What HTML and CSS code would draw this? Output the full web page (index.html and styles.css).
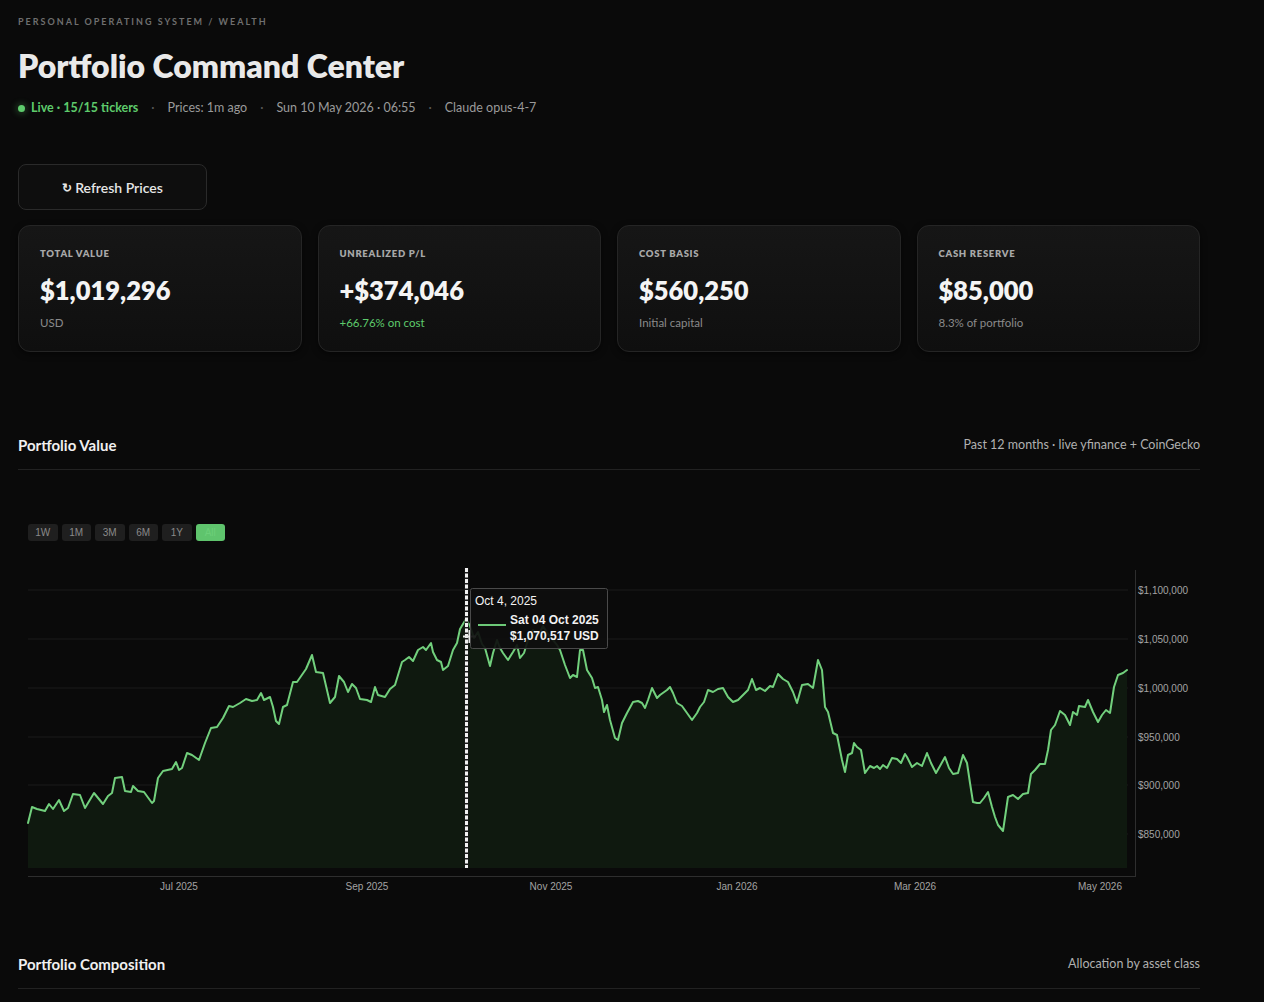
FILE: index.html
```html
<!DOCTYPE html>
<html lang="en">
<head>
<meta charset="utf-8">
<title>Portfolio Command Center</title>
<link rel="stylesheet" href="styles.css">
</head>
<body>
<main class="page">
  <div class="crumb">Personal Operating System / Wealth</div>
  <h1 class="title">Portfolio Command Center</h1>
  <div class="status">
    <span class="live"><span class="dot"></span>Live · 15/15 tickers</span>
    <span class="sep">·</span>
    <span>Prices: 1m ago</span>
    <span class="sep">·</span>
    <span>Sun 10 May 2026 · 06:55</span>
    <span class="sep">·</span>
    <span>Claude opus-4-7</span>
  </div>

  <button class="refresh" type="button"><span class="refresh-icon">↻</span> Refresh Prices</button>

  <section class="cards">
    <div class="card">
      <div class="card-label">Total Value</div>
      <div class="card-value">$1,019,296</div>
      <div class="card-sub">USD</div>
    </div>
    <div class="card">
      <div class="card-label">Unrealized P/L</div>
      <div class="card-value">+$374,046</div>
      <div class="card-sub pos">+66.76% on cost</div>
    </div>
    <div class="card">
      <div class="card-label">Cost Basis</div>
      <div class="card-value">$560,250</div>
      <div class="card-sub">Initial capital</div>
    </div>
    <div class="card">
      <div class="card-label">Cash Reserve</div>
      <div class="card-value">$85,000</div>
      <div class="card-sub">8.3% of portfolio</div>
    </div>
  </section>

  <header class="section-head">
    <h2>Portfolio Value</h2>
    <span class="section-note">Past 12 months · live yfinance + CoinGecko</span>
  </header>

  <div class="ranges">
    <button class="range" type="button">1W</button>
    <button class="range" type="button">1M</button>
    <button class="range" type="button">3M</button>
    <button class="range" type="button">6M</button>
    <button class="range" type="button">1Y</button>
    <button class="range active" type="button">All</button>
  </div>

  <svg class="chart" width="1182" height="340" viewBox="18 560 1182 340" xmlns="http://www.w3.org/2000/svg">
    <!-- horizontal gridlines: $50k steps -->
    <g class="grid">
      <line x1="28" y1="590" x2="1128" y2="590"/>
      <line x1="28" y1="639" x2="1128" y2="639"/>
      <line x1="28" y1="688" x2="1128" y2="688"/>
      <line x1="28" y1="737" x2="1128" y2="737"/>
      <line x1="28" y1="785" x2="1128" y2="785"/>
      <line x1="28" y1="834" x2="1128" y2="834"/>
    </g>

    <!-- area under the value series -->
    <polygon class="area" points="28,868 28,823 32,807 37,809 45,811 49,804 53,809 59,800 64,811 68,808 73,794 80,795 85,808 94,793 103,804 108,796 112,793 115,778 122,777 125,791 131,792 133,786 138,791 144,792 152,803 154,801 158,778 163,771 172,769 176,762 179,770 182,768 187,753 192,755 199,760 205,743 211,728 217,727 223,718 229,706 233,707 240,703 246,699 252,701 257,700 261,693 264,700 270,697 273,707 276,721 279,724 283,707 287,705 293,682 297,682 306,669 312,655 316,672 323,673 330,703 335,697 339,676 344,682 348,692 352,684 356,688 360,699 367,700 371,702 375,687 378,695 385,697 390,689 395,685 402,662 405,660 409,657 413,661 418,650 423,647 426,650 431,643 433,652 437,660 441,662 443,670 448,666 453,650 457,643 460,629 466,619 470,626 474,638 478,632 482,644 485,648 490,666 493,653 497,640 500,648 503,653 508,660 513,652 517,645 520,658 524,653 528,640 533,630 538,636 543,626 548,634 553,640 557,645 560,650 565,665 570,678 573,675 577,677 580,650 583,650 587,670 592,678 595,688 598,687 602,700 604,712 607,705 610,720 615,738 618,740 622,723 627,713 633,702 638,701 642,703 645,708 648,700 652,688 657,698 660,695 667,690 670,687 673,693 677,703 682,706 687,713 692,720 697,713 700,707 704,702 708,690 713,692 718,689 723,688 728,697 733,702 738,700 743,695 748,690 752,679 756,690 760,688 765,691 770,686 773,687 778,674 783,679 788,682 793,692 797,703 802,685 808,684 813,688 818,660 822,670 825,707 828,712 833,733 837,735 842,760 845,772 848,755 852,753 854,743 857,747 861,750 865,773 870,766 874,768 877,766 880,769 883,765 887,768 892,758 897,759 901,763 905,754 907,757 912,767 917,763 922,766 927,753 931,763 936,773 940,766 945,757 949,768 953,774 958,773 963,755 967,763 970,783 973,802 977,803 980,803 984,798 988,792 992,807 995,817 998,825 1003,831 1008,797 1013,795 1018,799 1023,794 1028,793 1031,774 1035,770 1040,764 1045,764 1048,750 1051,730 1055,725 1060,711 1065,715 1070,725 1073,712 1077,715 1079,706 1085,707 1088,700 1093,712 1098,722 1102,715 1106,710 1110,713 1114,687 1118,675 1123,673 1127,670 1127,868"/>

    <!-- value series -->
    <polyline class="series" points="28,823 32,807 37,809 45,811 49,804 53,809 59,800 64,811 68,808 73,794 80,795 85,808 94,793 103,804 108,796 112,793 115,778 122,777 125,791 131,792 133,786 138,791 144,792 152,803 154,801 158,778 163,771 172,769 176,762 179,770 182,768 187,753 192,755 199,760 205,743 211,728 217,727 223,718 229,706 233,707 240,703 246,699 252,701 257,700 261,693 264,700 270,697 273,707 276,721 279,724 283,707 287,705 293,682 297,682 306,669 312,655 316,672 323,673 330,703 335,697 339,676 344,682 348,692 352,684 356,688 360,699 367,700 371,702 375,687 378,695 385,697 390,689 395,685 402,662 405,660 409,657 413,661 418,650 423,647 426,650 431,643 433,652 437,660 441,662 443,670 448,666 453,650 457,643 460,629 466,619 470,626 474,638 478,632 482,644 485,648 490,666 493,653 497,640 500,648 503,653 508,660 513,652 517,645 520,658 524,653 528,640 533,630 538,636 543,626 548,634 553,640 557,645 560,650 565,665 570,678 573,675 577,677 580,650 583,650 587,670 592,678 595,688 598,687 602,700 604,712 607,705 610,720 615,738 618,740 622,723 627,713 633,702 638,701 642,703 645,708 648,700 652,688 657,698 660,695 667,690 670,687 673,693 677,703 682,706 687,713 692,720 697,713 700,707 704,702 708,690 713,692 718,689 723,688 728,697 733,702 738,700 743,695 748,690 752,679 756,690 760,688 765,691 770,686 773,687 778,674 783,679 788,682 793,692 797,703 802,685 808,684 813,688 818,660 822,670 825,707 828,712 833,733 837,735 842,760 845,772 848,755 852,753 854,743 857,747 861,750 865,773 870,766 874,768 877,766 880,769 883,765 887,768 892,758 897,759 901,763 905,754 907,757 912,767 917,763 922,766 927,753 931,763 936,773 940,766 945,757 949,768 953,774 958,773 963,755 967,763 970,783 973,802 977,803 980,803 984,798 988,792 992,807 995,817 998,825 1003,831 1008,797 1013,795 1018,799 1023,794 1028,793 1031,774 1035,770 1040,764 1045,764 1048,750 1051,730 1055,725 1060,711 1065,715 1070,725 1073,712 1077,715 1079,706 1085,707 1088,700 1093,712 1098,722 1102,715 1106,710 1110,713 1114,687 1118,675 1123,673 1127,670"/>

    <!-- axes -->
    <g class="axis">
      <line x1="1135.5" y1="570" x2="1135.5" y2="876"/>
      <line x1="28" y1="876.5" x2="1136" y2="876.5"/>
    </g>

    <g class="tick-y">
      <text x="1138" y="594">$1,100,000</text>
      <text x="1138" y="643">$1,050,000</text>
      <text x="1138" y="692">$1,000,000</text>
      <text x="1138" y="741">$950,000</text>
      <text x="1138" y="789">$900,000</text>
      <text x="1138" y="838">$850,000</text>
    </g>

    <g class="tick-x">
      <text x="179" y="890">Jul 2025</text>
      <text x="367" y="890">Sep 2025</text>
      <text x="551" y="890">Nov 2025</text>
      <text x="737" y="890">Jan 2026</text>
      <text x="915" y="890">Mar 2026</text>
      <text x="1100" y="890">May 2026</text>
    </g>

    <!-- hover spike and cursor -->
    <line class="spike-bg" x1="466.5" y1="568" x2="466.5" y2="868"/>
    <line class="spike" x1="466.5" y1="568" x2="466.5" y2="868"/>
    <g class="cursor">
      <line x1="463" y1="636.5" x2="476" y2="636.5"/>
      <line x1="469.5" y1="630" x2="469.5" y2="643"/>
    </g>

    <!-- hover label -->
    <g class="hover">
      <rect x="470.5" y="588.5" width="137" height="60" rx="2"/>
      <text class="hover-title" x="475" y="605">Oct 4, 2025</text>
      <line class="hover-swatch" x1="478" y1="625" x2="506" y2="625"/>
      <text class="hover-row" x="510" y="624">Sat 04 Oct 2025</text>
      <text class="hover-row" x="510" y="640">$1,070,517 USD</text>
    </g>
  </svg>

  <header class="section-head composition">
    <h2>Portfolio Composition</h2>
    <span class="section-note">Allocation by asset class</span>
  </header>
</main>
</body>
</html>
```

FILE: styles.css
```css
* {
  box-sizing: border-box;
}

html,
body {
  margin: 0;
  background: #0a0a0a;
}

body {
  font-family: Lato, "Noto Sans", "Liberation Sans", sans-serif;
  color: #e6e6e6;
  overflow: hidden;
}

.page {
  width: 1200px;
  padding: 16px 0 0 18px;
}

.crumb {
  font-size: 9px;
  line-height: 12px;
  font-weight: 700;
  letter-spacing: 2px;
  text-transform: uppercase;
  color: #6f6f6f;
}

.title {
  margin: 18px 0 0;
  font-size: 32px;
  line-height: 40px;
  font-weight: 800;
  letter-spacing: 0;
  color: #e9e9e9;
}

.status {
  margin-top: 13px;
  display: flex;
  align-items: center;
  gap: 13px;
  font-size: 12.5px;
  line-height: 18px;
  color: #9a9a9a;
}

.status .sep {
  color: #5a5a5a;
}

.live {
  display: inline-flex;
  align-items: center;
  gap: 6px;
  font-weight: 700;
  color: #5ecb6c;
}

.dot {
  width: 7px;
  height: 7px;
  border-radius: 50%;
  background: #5ecb6c;
  box-shadow: 0 0 6px 2px rgba(94, 203, 108, 0.25);
}

.refresh {
  margin-top: 47px;
  display: flex;
  align-items: center;
  justify-content: center;
  gap: 3px;
  width: 189px;
  height: 46px;
  border: 1px solid #2a2a2a;
  border-radius: 8px;
  background: #0e0e0e;
  color: #e6e6e6;
  font-family: inherit;
  font-size: 14px;
  font-weight: 600;
}

.refresh-icon {
  font-size: 12px;
  font-weight: 700;
}

.cards {
  margin-top: 15px;
  width: 1182px;
  display: grid;
  grid-template-columns: repeat(4, 1fr);
  column-gap: 16px;
}

.card {
  height: 127px;
  padding: 22px 22px 0 21px;
  border: 1px solid #252525;
  border-radius: 12px;
  background: linear-gradient(180deg, #161616 0%, #0f0f0f 100%);
  box-shadow: 0 2px 6px rgba(0, 0, 0, 0.5);
}

.card-label {
  font-size: 9.5px;
  line-height: 12px;
  font-weight: 800;
  letter-spacing: 0.7px;
  text-transform: uppercase;
  color: #a8a8a8;
}

.card-value {
  margin-top: 14px;
  font-size: 25.5px;
  line-height: 32px;
  font-weight: 800;
  color: #f4f4f4;
}

.card-sub {
  margin-top: 9px;
  font-size: 11.5px;
  line-height: 16px;
  color: #8a8a8a;
}

.card-sub.pos {
  color: #5ecb6c;
}

.section-head {
  margin-top: 83px;
  width: 1182px;
  display: flex;
  justify-content: space-between;
  align-items: center;
  padding-bottom: 14px;
  border-bottom: 1px solid #222;
}

.section-head h2 {
  margin: 0;
  font-size: 15px;
  line-height: 20px;
  font-weight: 700;
  color: #f0f0f0;
}

.section-note {
  font-size: 12.5px;
  line-height: 20px;
  color: #b0b0b0;
}

.ranges {
  margin-top: 54px;
  margin-left: 10px;
  display: flex;
  gap: 4px;
}

.range {
  width: 29.5px;
  height: 17px;
  padding: 0;
  border: none;
  border-radius: 3px;
  background: #1f1f1f;
  color: #8a8a8a;
  font-family: "Liberation Sans", Arial, sans-serif;
  font-size: 10px;
}

.range.active {
  background: #5fc46d;
  color: #6ccf79;
}

.chart {
  display: block;
  margin-top: 19px;
}

.grid line {
  stroke: #1b1b1b;
  stroke-width: 1;
}

.area {
  fill: #0f190f;
}

.series {
  fill: none;
  stroke: #72d07d;
  stroke-width: 2;
  stroke-linejoin: round;
  stroke-linecap: round;
}

.axis line {
  stroke: #2e2e2e;
  stroke-width: 1;
}

.tick-y text,
.tick-x text {
  font-family: "Liberation Sans", Arial, sans-serif;
  font-size: 10px;
  fill: #a3a3a3;
}

.tick-x text {
  text-anchor: middle;
}

.spike-bg {
  stroke: #1a1a1a;
  stroke-width: 4;
}

.spike {
  stroke: #f2f2f2;
  stroke-width: 3;
  stroke-dasharray: 4 1.5;
}

.cursor line {
  stroke: #e8e8e8;
  stroke-width: 2;
}

.hover rect {
  fill: rgba(14, 14, 14, 0.92);
  stroke: #4a4a4a;
  stroke-width: 1;
}

.hover text {
  font-family: "Liberation Sans", Arial, sans-serif;
  font-size: 12px;
  fill: #f2f2f2;
}

.hover .hover-row {
  font-weight: 700;
}

.hover-swatch {
  stroke: #6cc877;
  stroke-width: 2;
}

.section-head.composition {
  margin-top: 54px;
}
```
